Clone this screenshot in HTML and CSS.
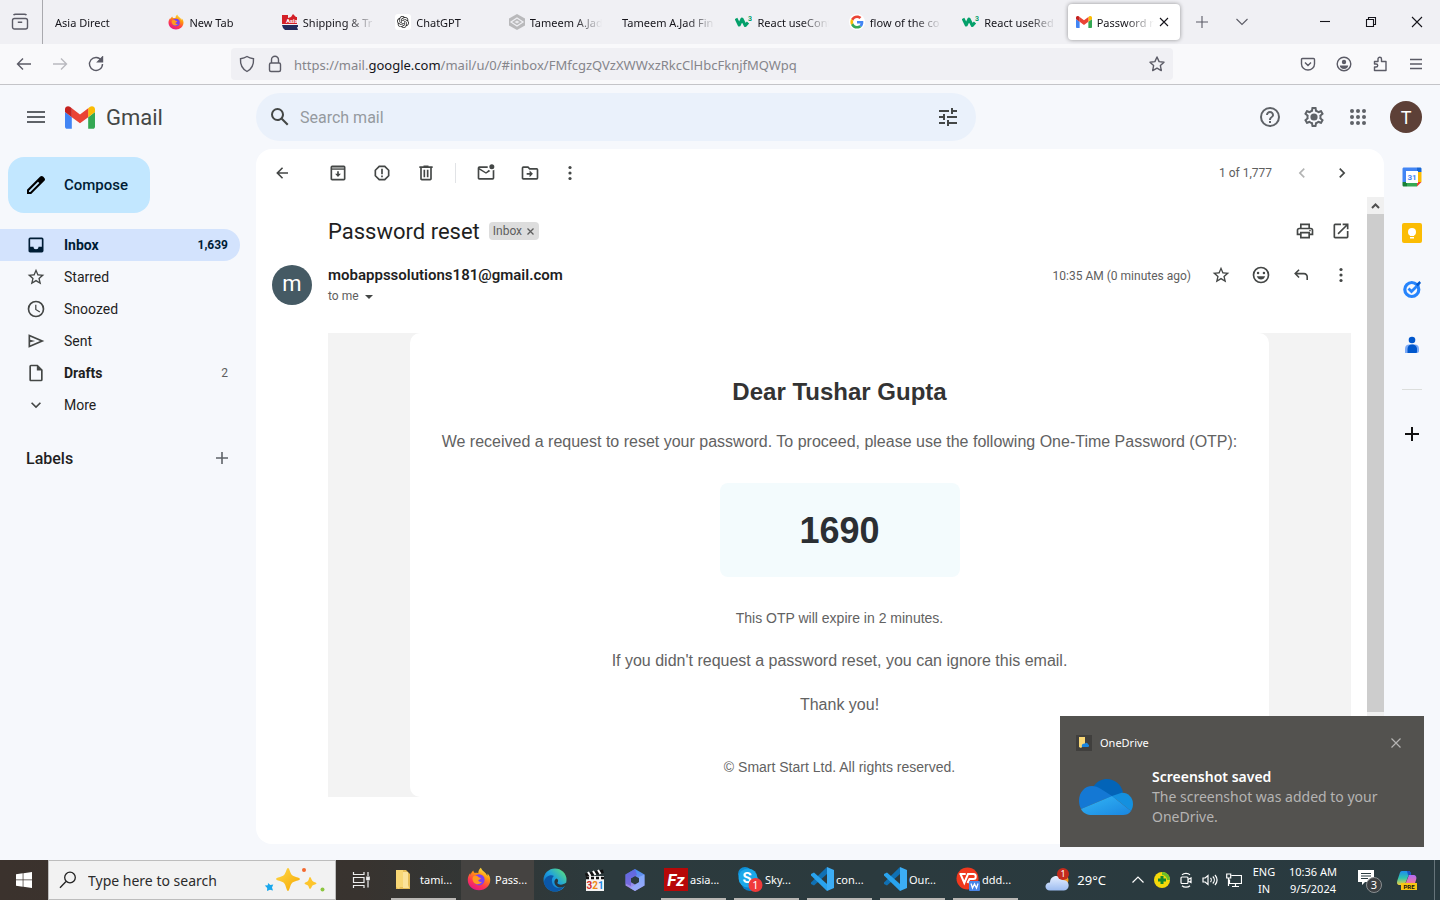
FILE: index.html
```html
<!DOCTYPE html>
<html lang="en">
<head>
<meta charset="utf-8">
<meta name="viewport" content="width=device-width, initial-scale=1">
<title>Password reset - Gmail</title>
<link rel="stylesheet" href="styles.css">
</head>
<body>
<svg class="sprite" aria-hidden="true">
  <defs>
    <linearGradient id="fx-body" x1="0.8" y1="0" x2="0.3" y2="1"><stop offset="0" stop-color="#fff44f"/><stop offset=".35" stop-color="#ff980e"/><stop offset=".7" stop-color="#ff3750"/><stop offset="1" stop-color="#e31587"/></linearGradient>
    <linearGradient id="edge-a" x1="0" y1="1" x2="1" y2="0"><stop offset="0" stop-color="#0c59a4"/><stop offset=".5" stop-color="#1b9de2"/><stop offset="1" stop-color="#66eb6e"/></linearGradient>
    <linearGradient id="hex-a" x1="0" y1="0" x2="0" y2="1"><stop offset="0" stop-color="#3f8ff0"/><stop offset="1" stop-color="#b98be8"/></linearGradient>
    <linearGradient id="cop-a" x1="0" y1="0" x2="0" y2="1"><stop offset="0" stop-color="#1d8df0"/><stop offset=".5" stop-color="#2fc4b0"/><stop offset="1" stop-color="#f4d03a"/></linearGradient>
    <linearGradient id="cop-b" x1="0" y1="0" x2="0" y2="1"><stop offset="0" stop-color="#b06af5"/><stop offset="1" stop-color="#ff7a8a"/></linearGradient>
    <linearGradient id="cloud-a" x1="0" y1="0" x2="0" y2="1"><stop offset="0" stop-color="#e6efff"/><stop offset="1" stop-color="#9dbcf0"/></linearGradient>
    <linearGradient id="spark-a" x1="0" y1="0" x2="1" y2="1"><stop offset="0" stop-color="#ffd84a"/><stop offset="1" stop-color="#f5a800"/></linearGradient>
    <linearGradient id="od-a" x1="0" y1="0" x2="1" y2="1"><stop offset="0" stop-color="#33b6f5"/><stop offset="1" stop-color="#1a86e0"/></linearGradient>
  </defs>
  <symbol id="gmail" viewBox="52 42 88 66"><path fill="#4285f4" d="M58 108h14V74L52 59v43c0 3.300 2.700 6 6 6"/><path fill="#34a853" d="M120 108h14c3.300 0 6-2.700 6-6V59l-20 15"/><path fill="#fbbc04" d="M120 48v26l20-15v-8c0-7.400-8.500-11.700-14.400-7.200"/><path fill="#ea4335" d="M72 74V48l24 18 24-18v26L96 92"/><path fill="#c5221f" d="M52 51v8l20 15V48l-5.600-4.200c-5.900-4.500-14.400-.2-14.400 7.200"/></symbol>
  <symbol id="firefox" viewBox="0 0 32 32"><path fill="url(#fx-body)" d="M18.500 1c1 3 4 5 6 7 1.500 1.500 2 3 2.500 4 .5-1 .5-2.500.3-3.500C30 11 31 14 31 17c0 8-6.500 14-15 14S1 25 1 17c0-3.500 1.500-7 3.500-9 0 1 .1 1.600.5 2.200C5.500 8 7 6 8.500 4.800c.1 1.500.8 2.700 2 3.200 1.500-.3 3-.2 4.500.2C15 5 16.500 2.500 18.500 1z"/><circle cx="16" cy="17" r="7.500" fill="#7b3ff2"/><path fill="#ff9a1f" d="M8 13c3-3 6-1 7.500.5 1.500.4 3 .7 3 1.500-.5 1.500-3 1.500-3.500 3 .5 1.500 2.500 2.500 5 1.500-2 4-8 4.500-11 1-2-2.500-2-5-1-7.500z"/></symbol>
  <symbol id="star" viewBox="0 0 24 24"><path d="M22 9.240l-7.190-.62L12 2 9.190 8.630 2 9.240l5.460 4.730L5.820 21 12 17.270 18.180 21l-1.630-7.030L22 9.240zM12 15.400l-3.760 2.270 1-4.280-3.320-2.880 4.380-.38L12 6.100l1.710 4.040 4.380.38-3.320 2.880 1 4.280L12 15.400z"/></symbol>
  <symbol id="dots" viewBox="0 0 20 20"><circle cx="10" cy="4.500" r="1.600"/><circle cx="10" cy="10" r="1.600"/><circle cx="10" cy="15.500" r="1.600"/></symbol>
  <symbol id="vscode" viewBox="0 0 24 24"><path fill="#1070b3" d="M17 0v7L4 18.500 1 17v-1.500z"/><path fill="#29a3ee" d="M17 24v-7L4 5.500 1 7v1.500z"/><path fill="#3cadf5" d="M17 0l7 3v18l-7 3z"/></symbol>
  <symbol id="cloud" viewBox="0 0 56 38"><path fill="#0364b8" d="M15 9C19 3 24 1 29 1c7 0 14 5 16 13L33 25z"/><path fill="#1478d4" d="M1 23C1 14 7 8 14 8c3 0 6 1 9 3l11 7L3 31c-1-2-2-5-2-8z"/><path fill="#1490df" d="M34 18l9-3c6-1 12 4 12 11 0 3-1 5-2 7z"/><path fill="url(#od-a)" d="M3 31l31-13 19 15c-2 3-5 4-8 4H14c-5 0-9-2-11-6z"/></symbol>
</svg>

<div class="screen">
  <header class="browser">
    <div class="tabstrip">
      <button class="tab-overview" aria-label="View recent browsing"><svg width="18" height="18" viewBox="0 0 18 18" class="line"><rect x="1.500" y="5.500" width="15" height="10.500" rx="2"/><path d="M2.500 2.200C3 1.500 3.500 1.200 4.500 1.200h9c1 0 1.500.3 2 1M6.800 9.300h4.400"/></svg></button>
      <div class="tabs" role="tablist">
        <button class="tab" role="tab"><span class="tab-title">Asia Direct</span></button>
        <button class="tab" role="tab"><svg width="16" height="16"><use href="#firefox"/></svg><span class="tab-title">New Tab</span></button>
        <button class="tab" role="tab"><svg width="16" height="16" viewBox="0 0 16 16"><path fill="#d32027" d="M0 1h6v3l3-1 2-3 3 3h1v7H0z"/><path fill="#222a5c" d="M0 11h16v2h-1l1 3H3l-2-2z"/><text x="4" y="9" font-size="6" font-weight="700" font-family="Roboto, sans-serif" fill="#fff">Asia</text></svg><span class="tab-title">Shipping &amp; Tr</span></button>
        <button class="tab" role="tab"><svg width="16" height="16" viewBox="-4 -4 32 32"><rect x="-4" y="-4" width="32" height="32" rx="6" fill="#fff"/><path fill="#222" d="M22.280 9.820a5.980 5.980 0 0 0-.52-4.910 6.050 6.050 0 0 0-6.510-2.900A6.070 6.070 0 0 0 4.980 4.180a5.980 5.980 0 0 0-4 2.900 6.050 6.050 0 0 0 .74 7.100 5.980 5.980 0 0 0 .51 4.910 6.050 6.050 0 0 0 6.520 2.900A5.980 5.980 0 0 0 13.260 24a6.060 6.060 0 0 0 5.770-4.210 5.990 5.990 0 0 0 4-2.900 6.060 6.060 0 0 0-.75-7.070zm-9.020 12.610a4.480 4.480 0 0 1-2.880-1.040l.14-.08 4.780-2.760a.8.8 0 0 0 .39-.68v-6.740l2.020 1.170a.07.07 0 0 1 .04.05v5.580a4.500 4.500 0 0 1-4.490 4.500zm-9.660-4.130a4.470 4.470 0 0 1-.53-3.010l.14.09 4.780 2.750a.77.77 0 0 0 .78 0l5.840-3.370v2.340a.08.08 0 0 1-.03.06L9.740 19.950a4.500 4.500 0 0 1-6.140-1.650zM2.340 7.900a4.490 4.490 0 0 1 2.370-1.980V11.600a.77.77 0 0 0 .39.680l5.810 3.350-2.020 1.170a.08.08 0 0 1-.07 0l-4.830-2.790A4.500 4.500 0 0 1 2.340 7.900zm16.600 3.850L13.100 8.360 15.120 7.200a.08.08 0 0 1 .07 0l4.830 2.790a4.490 4.490 0 0 1-.68 8.110v-5.680a.79.79 0 0 0-.4-.67zm2.010-3.020l-.14-.09-4.780-2.780a.78.78 0 0 0-.78 0L9.410 9.230V6.900a.07.07 0 0 1 .03-.06l4.830-2.790a4.500 4.500 0 0 1 6.680 4.680zM8.310 12.860l-2.020-1.160a.08.08 0 0 1-.04-.06V6.070a4.500 4.500 0 0 1 7.370-3.450l-.14.08L8.700 5.460a.8.8 0 0 0-.39.680zm1.100-2.360l2.600-1.500 2.600 1.500v3l-2.600 1.500-2.600-1.500z"/></svg><span class="tab-title">ChatGPT</span></button>
        <button class="tab" role="tab"><svg width="16" height="16" viewBox="0 0 16 16"><path fill="#b9b9bb" d="M8 0l8 4.500v7L8 16 0 11.500v-7z"/><path fill="none" stroke="#f0f0f4" stroke-width="1.200" d="M2 8l6-4 6 4-6 4z"/><path fill="#e9e9ec" d="M8 6.500L10.500 8 8 9.500 5.500 8z"/></svg><span class="tab-title">Tameem A.Jad</span></button>
        <button class="tab" role="tab"><span class="tab-title">Tameem A.Jad Fin</span></button>
        <button class="tab" role="tab"><svg width="17" height="16" viewBox="0 0 17 16"><path fill="none" stroke="#04a06a" stroke-width="3" stroke-linejoin="round" d="M1 4.500l3.200 6.500L7 5l3.300 6.500L13 8.500"/><text x="13" y="7" font-size="7" font-weight="700" font-family="Roboto, sans-serif" fill="#04a06a">3</text></svg><span class="tab-title">React useCont</span></button>
        <button class="tab" role="tab"><svg width="16" height="16" viewBox="-5 -5 58 58"><circle cx="24" cy="24" r="29" fill="#fff"/><path fill="#EA4335" d="M24 9.500c3.540 0 6.710 1.220 9.210 3.600l6.850-6.850C35.900 2.380 30.470 0 24 0 14.620 0 6.510 5.380 2.560 13.220l7.980 6.190C12.430 13.720 17.740 9.500 24 9.500z"/><path fill="#4285F4" d="M46.980 24.550c0-1.570-.15-3.090-.38-4.550H24v9.020h12.940c-.58 2.960-2.260 5.480-4.780 7.180l7.730 6c4.510-4.180 7.090-10.360 7.090-17.650z"/><path fill="#FBBC05" d="M10.530 28.590c-.48-1.450-.76-2.990-.76-4.590s.27-3.140.76-4.590l-7.980-6.190C.92 16.460 0 20.120 0 24c0 3.880.92 7.540 2.560 10.780l7.970-6.190z"/><path fill="#34A853" d="M24 48c6.480 0 11.930-2.130 15.890-5.810l-7.730-6c-2.150 1.450-4.920 2.300-8.160 2.300-6.260 0-11.570-4.220-13.470-9.910l-7.980 6.190C6.510 42.620 14.620 48 24 48z"/></svg><span class="tab-title">flow of the co</span></button>
        <button class="tab" role="tab"><svg width="17" height="16" viewBox="0 0 17 16"><path fill="none" stroke="#04a06a" stroke-width="3" stroke-linejoin="round" d="M1 4.500l3.200 6.500L7 5l3.300 6.500L13 8.500"/><text x="13" y="7" font-size="7" font-weight="700" font-family="Roboto, sans-serif" fill="#04a06a">3</text></svg><span class="tab-title">React useRed</span></button>
        <button class="tab tab-active" role="tab" aria-selected="true"><svg width="16" height="12"><use href="#gmail"/></svg><span class="tab-title">Password r</span><svg class="line thin dark" width="10" height="10" viewBox="0 0 10 10"><path d="M1 1l8 8M9 1L1 9"/></svg></button>
      </div>
      <div class="tab-tools">
        <button aria-label="New tab"><svg class="line thin" width="14" height="14" viewBox="0 0 14 14"><path d="M7 1v12M1 7h12"/></svg></button>
        <button aria-label="List all tabs"><svg class="line thin" width="14" height="14" viewBox="0 0 14 14"><path d="M1.500 4L7 9.500 12.500 4"/></svg></button>
      </div>
      <div class="window-tools">
        <button aria-label="Minimize"><svg class="line thin dark" width="12" height="12" viewBox="0 0 12 12"><path d="M1 5.500h10"/></svg></button>
        <button aria-label="Restore"><svg class="line thin dark" width="12" height="12" viewBox="0 0 12 12"><path d="M1.500 3.500h7v7h-7zM3.500 3.500v-2h7v7h-2"/></svg></button>
        <button aria-label="Close"><svg class="line thin dark" width="12" height="12" viewBox="0 0 12 12"><path d="M1 1l10 10M11 1L1 11"/></svg></button>
      </div>
    </div>
    <div class="navbar">
      <div class="nav-left">
        <button aria-label="Back"><svg class="line" width="16" height="16" viewBox="0 0 16 16"><path d="M15 8H1.500M7 2.500L1.500 8 7 13.500"/></svg></button>
        <button aria-label="Forward" disabled><svg class="line" width="16" height="16" viewBox="0 0 16 16"><path d="M1 8h13.500M9 2.500L14.500 8 9 13.500"/></svg></button>
        <button aria-label="Reload"><svg class="line" width="16" height="16" viewBox="0 0 16 16"><path d="M13.500 4.500A6.500 6.500 0 1 0 14.500 8"/><path d="M14.500 1v4.800H9.800z" fill="#5b5b66"/></svg></button>
      </div>
      <div class="urlbar">
        <svg class="line" width="18" height="18" viewBox="0 0 18 18"><path d="M9 1.500c2 1.300 4 1.900 6.500 2.200.4 5.800-1.500 10-6.500 12.800C4 13.700 2.100 9.500 2.500 3.700 5 3.400 7 2.800 9 1.500z"/></svg>
        <svg class="line" width="18" height="18" viewBox="0 0 18 18"><rect x="3.500" y="8" width="11" height="8.500" rx="1.500"/><path d="M5.500 8V4.800a3.500 3.500 0 0 1 7 0V8"/></svg>
        <div class="url" role="textbox" aria-label="Address" contenteditable="true" spellcheck="false">https://mail.<b>google.com</b>/mail/u/0/#inbox/FMfcgzQVzXWWxzRkcClHbcFknjfMQWpq</div>
        <button aria-label="Bookmark"><svg class="line" width="16" height="16" viewBox="0 0 16 16"><path stroke-linejoin="round" d="M8 1l2.100 4.600 4.900.6-3.600 3.400.9 5L8 12.100 3.700 14.600l.9-5L1 6.200l4.900-.6z"/></svg></button>
      </div>
      <div class="nav-right">
        <button aria-label="Pocket"><svg class="line" width="16" height="16" viewBox="0 0 16 16"><path d="M2.500 2.500h11c.7 0 1 .4 1 1V8a6.500 6 0 0 1-13 0V3.500c0-.6.300-1 1-1zM5 6.500l3 3 3-3"/></svg></button>
        <button aria-label="Account"><svg class="line" width="16" height="16" viewBox="0 0 16 16"><circle cx="8" cy="8" r="6.800"/><circle cx="8" cy="6" r="2.200" fill="#5b5b66" stroke="none"/><path fill="#5b5b66" stroke="none" d="M3.800 9.500h8.400C12 11.500 10.500 13 8 13s-4-1.500-4.200-3.500z"/></svg></button>
        <button aria-label="Extensions"><svg class="line" width="16" height="16" viewBox="0 0 16 16"><path stroke-linejoin="round" d="M2.500 5.500h3.500V3c0-2.300 3.500-2.300 3.500 0v2.500h4.500v9H2.500V11H4c2.300 0 2.300-3 0-3H2.500z"/></svg></button>
        <button aria-label="Menu"><svg class="line" width="14" height="14" viewBox="0 0 14 14"><path d="M1 2.500h12M1 7h12M1 11.500h12"/></svg></button>
      </div>
    </div>
  </header>

  <div class="gmail">
    <header class="gm-header">
      <div class="brand">
        <button aria-label="Main menu"><svg class="fill" width="24" height="24" viewBox="0 0 24 24"><path d="M3 18h18v-2H3v2zm0-5h18v-2H3v2zm0-7v2h18V6H3z"/></svg></button>
        <a href="#"><svg width="30" height="23"><use href="#gmail"/></svg><span>Gmail</span></a>
      </div>
      <form class="search">
        <button type="button" aria-label="Search"><svg class="fill deep" width="24" height="24" viewBox="0 0 24 24"><path d="M20.490 19l-5.730-5.730C15.530 12.200 16 10.910 16 9.500A6.500 6.500 0 1 0 9.500 16c1.410 0 2.700-.47 3.770-1.240L19 20.490 20.490 19zM5 9.500C5 7.010 7.010 5 9.500 5S14 7.010 14 9.500 11.990 14 9.500 14 5 11.990 5 9.500z"/></svg></button>
        <input type="search" placeholder="Search mail" aria-label="Search mail">
        <button type="button" aria-label="Search options"><svg class="fill deep" width="24" height="24" viewBox="0 0 24 24"><path d="M3 17v2h6v-2H3zM3 5v2h10V5H3zm10 16v-2h8v-2h-8v-2h-2v6h2zM7 9v2H3v2h4v2h2V9H7zm14 4v-2H11v2h10zm-6-4h2V7h4V5h-4V3h-2v6z"/></svg></button>
      </form>
      <div class="gm-tools">
        <button aria-label="Support"><svg class="fill" width="24" height="24" viewBox="0 0 24 24"><path d="M11 18h2v-2h-2v2zm1-16a10 10 0 1 0 0 20 10 10 0 0 0 0-20zm0 18a8 8 0 1 1 0-16 8 8 0 0 1 0 16zm0-14c-2.210 0-4 1.790-4 4h2c0-1.100.9-2 2-2s2 .9 2 2c0 2-3 1.750-3 5h2c0-2.250 3-2.500 3-5 0-2.210-1.790-4-4-4z"/></svg></button>
        <button aria-label="Settings"><svg class="fill" width="24" height="24" viewBox="0 0 24 24"><path d="M19.430 12.980c.04-.32.07-.64.07-.98 0-.34-.03-.66-.07-.98l2.110-1.650c.19-.15.24-.42.12-.64l-2-3.460c-.09-.16-.26-.25-.44-.25-.06 0-.12.01-.17.03l-2.490 1c-.52-.4-1.080-.73-1.690-.98l-.38-2.650C14.460 2.180 14.250 2 14 2h-4c-.25 0-.46.18-.49.42l-.38 2.650c-.61.25-1.170.59-1.690.98l-2.490-1c-.06-.02-.12-.03-.18-.03-.17 0-.34.09-.43.25l-2 3.460c-.13.22-.07.49.12.64l2.110 1.650c-.04.32-.07.65-.07.98 0 .33.03.66.07.98l-2.110 1.650c-.19.15-.24.42-.12.64l2 3.460c.09.16.26.25.44.25.06 0 .12-.01.17-.03l2.490-1c.52.4 1.080.73 1.690.98l.38 2.650c.03.24.24.42.49.42h4c.25 0 .46-.18.49-.42l.38-2.650c.61-.25 1.170-.59 1.690-.98l2.490 1c.06.02.12.03.18.03.17 0 .34-.09.43-.25l2-3.460c.12-.22.07-.49-.12-.64l-2.110-1.650zm-1.980-1.710c.04.31.05.52.05.73 0 .21-.02.43-.05.73l-.14 1.130.89.7 1.080.84-.7 1.210-1.270-.51-1.040-.42-.9.68c-.43.32-.84.56-1.250.73l-1.060.43-.16 1.130-.2 1.350h-1.400l-.19-1.350-.16-1.130-1.060-.43c-.43-.18-.83-.41-1.230-.71l-.91-.7-1.060.43-1.270.51-.7-1.210 1.080-.84.89-.7-.14-1.130c-.03-.31-.05-.54-.05-.74s.02-.43.05-.73l.14-1.130-.89-.7-1.080-.84.7-1.210 1.270.51 1.040.42.9-.68c.43-.32.84-.56 1.250-.73l1.060-.43.16-1.130.2-1.350h1.390l.19 1.350.16 1.130 1.060.43c.43.18.83.41 1.230.71l.91.7 1.060-.43 1.270-.51.7 1.210-1.070.85-.89.7.14 1.130z"/><circle cx="12" cy="12" r="3.600"/></svg></button>
        <button aria-label="Google apps"><svg class="fill" width="24" height="24" viewBox="0 0 24 24"><circle cx="6" cy="6" r="2"/><circle cx="12" cy="6" r="2"/><circle cx="18" cy="6" r="2"/><circle cx="6" cy="12" r="2"/><circle cx="12" cy="12" r="2"/><circle cx="18" cy="12" r="2"/><circle cx="6" cy="18" r="2"/><circle cx="12" cy="18" r="2"/><circle cx="18" cy="18" r="2"/></svg></button>
        <button class="profile" aria-label="Google Account">T</button>
      </div>
    </header>

    <aside class="sidebar">
      <button class="compose"><svg width="24" height="24" viewBox="0 0 24 24"><path d="M20.410 4.940l-1.350-1.350a2 2 0 0 0-2.830 0L3 16.820V21h4.180L20.410 7.770c.79-.78.79-2.050 0-2.830zM6.300 19H5v-1.300L14 8.700 15.300 10z"/></svg>Compose</button>
      <nav class="folders">
        <a href="#" class="folder folder-on"><svg width="20" height="20" viewBox="0 0 24 24"><path d="M19 3H5a2 2 0 0 0-2 2v14c0 1.100.9 2 2 2h14a2 2 0 0 0 2-2V5a2 2 0 0 0-2-2zm0 11h-4a3 3 0 0 1-6 0H5V5h14z"/></svg><span>Inbox</span><em>1,639</em></a>
        <a href="#" class="folder"><svg width="20" height="20"><use href="#star"/></svg><span>Starred</span></a>
        <a href="#" class="folder"><svg width="20" height="20" viewBox="0 0 24 24"><path d="M12 2a10 10 0 1 0 0 20 10 10 0 0 0 0-20zm0 18a8 8 0 1 1 0-16 8 8 0 0 1 0 16zm.5-13H11v6l5.200 3.200.8-1.300-4.500-2.700z"/></svg><span>Snoozed</span></a>
        <a href="#" class="folder"><svg width="20" height="20" viewBox="0 0 24 24"><path d="M3 4v16l19-8L3 4zm2 3l11.850 5L5 17v-3.500l6-1.500-6-1.500V7z"/></svg><span>Sent</span></a>
        <a href="#" class="folder folder-bold"><svg width="20" height="20" viewBox="0 0 24 24"><path d="M14 2H6a2 2 0 0 0-2 2v16c0 1.100.9 2 2 2h12a2 2 0 0 0 2-2V8l-6-6zM6 20V4h7v5h5v11H6z"/></svg><span>Drafts</span><em>2</em></a>
        <a href="#" class="folder"><svg width="20" height="20" viewBox="0 0 24 24"><path d="M16.590 8.590L12 13.170 7.410 8.590 6 10l6 6 6-6z"/></svg><span>More</span></a>
      </nav>
      <div class="labels"><h2>Labels</h2><button aria-label="Create new label"><svg class="fill" width="20" height="20" viewBox="0 0 20 20"><path d="M9.200 4h1.600v5.200H16v1.600h-5.200V16H9.200v-5.200H4V9.200h5.200z"/></svg></button></div>
    </aside>

    <main class="panel">
      <div class="mail-tools">
        <button class="back" aria-label="Back to Inbox"><svg width="20" height="20" viewBox="0 0 20 20"><path d="M16 9.200H7.200l3.900-3.900L10 4.200 4.200 10l5.800 5.800 1.100-1.100-3.900-3.900H16z"/></svg></button>
        <button aria-label="Archive"><svg width="20" height="20" viewBox="0 0 24 24"><path d="M19 3H5a2 2 0 0 0-2 2v14c0 1.100.9 2 2 2h14a2 2 0 0 0 2-2V5a2 2 0 0 0-2-2zM5 19V8h14v11zM5 6.500V5h14v1.500z"/><path d="M5 5h14v1.500H5z" opacity=".5"/><path d="M11 10h2v3h2.500L12 16.800 8.500 13H11z"/></svg></button>
        <button aria-label="Report spam"><svg width="20" height="20" viewBox="0 0 24 24"><path d="M15.730 3H8.270L3 8.270v7.460L8.270 21h7.460L21 15.730V8.270L15.730 3zM19 14.900L14.900 19H9.100L5 14.900V9.100L9.100 5h5.800L19 9.100v5.800zM11 15h2v2h-2zm0-8h2v6.500h-2z"/></svg></button>
        <button aria-label="Delete"><svg width="20" height="20" viewBox="0 0 24 24"><path d="M15 4V3H9v1H4v2h1v13c0 1.100.9 2 2 2h10a2 2 0 0 0 2-2V6h1V4h-5zm2 15H7V6h10v13zM9 8h2v9H9zm4 0h2v9h-2z"/></svg></button>
        <span class="sep"></span>
        <button aria-label="Mark as unread"><svg width="20" height="20" viewBox="0 0 24 24"><path d="M20 8.700V18H4V8l8 5 5.300-3.300c-.8-.4-1.500-1-1.900-1.700L12 11 4 6h10.100a5 5 0 0 1 0-2H4a2 2 0 0 0-2 2v12c0 1.100.9 2 2 2h16a2 2 0 0 0 2-2V8c-.6.400-1.300.600-2 .7z"/><circle cx="19" cy="4.500" r="3"/></svg></button>
        <button aria-label="Move to"><svg width="20" height="20" viewBox="0 0 24 24"><path d="M20 6h-8l-2-2H4a2 2 0 0 0-2 2v12c0 1.100.9 2 2 2h16a2 2 0 0 0 2-2V8a2 2 0 0 0-2-2zm0 12H4V6h5.200l2 2H20v10zm-8.500-1v-3H8v-2h3.500V9l4 4z"/></svg></button>
        <button class="tight" aria-label="More"><svg width="20" height="20"><use href="#dots"/></svg></button>
        <span class="count">1 of 1,777</span>
        <button class="faint" aria-label="Newer"><svg width="20" height="20" viewBox="0 0 24 24"><path d="M15.410 7.410L14 6l-6 6 6 6 1.410-1.410L10.830 12z"/></svg></button>
        <button aria-label="Older"><svg width="20" height="20" viewBox="0 0 24 24"><path d="M8.590 16.590L10 18l6-6-6-6-1.410 1.410L13.170 12z"/></svg></button>
      </div>
      <div class="scroller">
        <article class="message">
          <div class="subject">
            <h1>Password reset</h1>
            <button class="chip">Inbox <svg width="9" height="9" viewBox="0 0 9 9"><path d="M1.500 1.500l6 6M7.500 1.500l-6 6" stroke="#5e5e5e" stroke-width="1.300"/></svg></button>
            <div class="subject-tools">
              <button aria-label="Print all"><svg width="20" height="20" viewBox="0 0 24 24"><path d="M19 8h-1V3H6v5H5a3 3 0 0 0-3 3v6h4v4h12v-4h4v-6a3 3 0 0 0-3-3zM8 5h8v3H8V5zm8 14H8v-4h8v4zm2-4v-2H6v2H4v-4c0-.55.45-1 1-1h14c.55 0 1 .45 1 1v4h-2z"/><circle cx="18" cy="11.500" r="1"/></svg></button>
              <button aria-label="In new window"><svg width="20" height="20" viewBox="0 0 24 24"><path d="M19 19H5V5h7V3H5a2 2 0 0 0-2 2v14c0 1.100.9 2 2 2h14a2 2 0 0 0 2-2v-7h-2v7zM14 3v2h3.590l-9.830 9.830 1.410 1.410L19 6.410V10h2V3h-7z"/></svg></button>
            </div>
          </div>
          <div class="sender">
            <span class="avatar">m</span>
            <div class="from"><strong>mobappssolutions181@gmail.com</strong><button>to me <svg width="8" height="4" viewBox="0 0 8 4"><path d="M0 0h8L4 4z"/></svg></button></div>
            <time>10:35 AM (0 minutes ago)</time>
            <div class="sender-tools">
              <button aria-label="Star"><svg width="20" height="20"><use href="#star"/></svg></button>
              <button aria-label="Add reaction"><svg width="20" height="20" viewBox="0 0 24 24"><path d="M12 2a10 10 0 1 0 0 20 10 10 0 0 0 0-20zm0 18a8 8 0 1 1 0-16 8 8 0 0 1 0 16z"/><circle cx="8.500" cy="9.500" r="1.500"/><circle cx="15.500" cy="9.500" r="1.500"/><path d="M7 13.500h10c-.7 2.300-2.700 4-5 4s-4.300-1.700-5-4z"/></svg></button>
              <button aria-label="Reply"><svg width="20" height="20" viewBox="0 0 20 20"><path d="M7.500 4.200l1.100 1.100-2.500 2.500H13c2.300 0 4 1.700 4 4V15h-1.600v-3.200c0-1.400-1-2.400-2.400-2.400H6.100l2.500 2.500L7.500 13 3.100 8.600z"/></svg></button>
              <button aria-label="More"><svg width="20" height="20"><use href="#dots"/></svg></button>
            </div>
          </div>
          <div class="email">
            <section class="card">
              <h2>Dear Tushar Gupta</h2>
              <p class="lead">We received a request to reset your password. To proceed, please use the following One-Time Password (OTP):</p>
              <div class="otp">1690</div>
              <p class="small">This OTP will expire in 2 minutes.</p>
              <p>If you didn't request a password reset, you can ignore this email.</p>
              <p>Thank you!</p>
              <p class="small legal">© Smart Start Ltd. All rights reserved.</p>
            </section>
          </div>
        </article>
        <div class="scrollbar"><button aria-label="Scroll up"><svg width="9" height="6" viewBox="0 0 9 6"><path d="M1 5l3.500-3.500L8 5" fill="none" stroke="#505050" stroke-width="2"/></svg></button><span></span></div>
      </div>
    </main>

    <aside class="rail">
      <button aria-label="Calendar"><svg width="20" height="20" viewBox="0 0 20 20"><path fill="#4285f4" d="M2 .5h13V5H5v10H.500V2C.500 1 1 .5 2 .5z"/><path fill="#1967d2" d="M15 .5h3c1 0 1.500.5 1.500 1.500v3H15z"/><path fill="#fbbc04" d="M15 5h4.500v10H15z"/><path fill="#34a853" d="M5 15h10v4.500H5z"/><path fill="#188038" d="M.500 15H5v4.500H2c-1 0-1.500-.5-1.500-1.500z"/><path fill="#ea4335" d="M15 15h4.500L15 19.500z"/><path fill="#fff" d="M4 4h12v12H4z"/><text x="10" y="13" text-anchor="middle" font-size="8" font-weight="700" font-family="Roboto, sans-serif" fill="#4285f4">31</text></svg></button>
      <button aria-label="Keep"><svg width="20" height="20" viewBox="0 0 20 20"><rect width="20" height="20" rx="2" fill="#fbbc04"/><circle cx="10" cy="9" r="4" fill="#fff"/><path fill="#fff" d="M8 11h4v2H8zM8 14h4v1.500H8z"/></svg></button>
      <button aria-label="Tasks"><svg width="20" height="20" viewBox="0 0 20 20"><circle cx="9.800" cy="10.500" r="7" fill="none" stroke="#2684fc" stroke-width="3.200"/><path fill="none" stroke="#2684fc" stroke-width="2.800" d="M6.500 9.500l3 3L17 5"/><path fill="#0057cc" d="M14 5.300L17.500 2 19 4l-3.300 3.400z"/></svg></button>
      <button aria-label="Contacts"><svg width="20" height="20" viewBox="0 0 20 20"><circle cx="10" cy="5" r="3.300" fill="#0057cc"/><path fill="#7baaf7" d="M3 18v-4.500C3 11 5 9.500 7 9.500h6c2 0 4 1.500 4 4V16c0 1.200-.8 2-2 2z"/><path fill="#0057cc" d="M5.500 18v-4c0-2.500 1.500-4.500 4.500-4.500s5 2 5 4.500v2.500c0 1-.5 1.500-1.500 1.500z"/></svg></button>
      <hr>
      <button aria-label="Get add-ons"><svg width="20" height="20" viewBox="0 0 20 20"><path fill="#111" d="M9 3h2v6h6v2h-6v6H9v-6H3V9h6z"/></svg></button>
    </aside>
  </div>

  <footer class="taskbar">
    <button class="start" aria-label="Start"><svg width="16" height="16" viewBox="0 0 16 16" fill="#fff"><path d="M0 2.200l6.700-.9v6.300H0zM7.400 1.200L16 0v7.600H7.400zM0 8.300h6.700v6.400L0 13.800zM7.400 8.300H16V16l-8.600-1.200z"/></svg></button>
    <label class="win-search">
      <svg width="18" height="18" viewBox="0 0 18 18" fill="none" stroke="#222" stroke-width="1.300"><circle cx="11" cy="6.500" r="5.300"/><path d="M7 10.500L1 16.800"/></svg>
      <input type="text" placeholder="Type here to search" aria-label="Type here to search">
      <svg width="62" height="26" viewBox="0 0 62 26"><path fill="url(#spark-a)" d="M24 1c1.500 0 2 5 4 7s8 2.500 8 4-6 2-8 4-2.500 8-4 8-2-6-4-8-8-2.500-8-4 6-2 8-4 2.500-7 4-7z"/><path fill="#fdc52c" d="M46 10c1 0 1.500 3 2.500 4s4 1.500 4 2.500-3 1-4 2-1.500 3.500-2.500 3.500-1-2.500-2-3.500-3.500-1-3.500-2 2.500-1.500 3.500-2.500 1-4 2-4z"/><path fill="#1aa7ec" d="M4 16l2.300 2 3-.5-1.300 3 1 3-3-.8-3 1.300.2-3L.8 18.600l3-.3z"/><circle cx="40" cy="3" r="2" fill="#f4682f"/><circle cx="58.500" cy="22.500" r="2" fill="#8cc63f"/></svg>
    </label>
    <button class="view" aria-label="Task View"><svg width="18" height="16" viewBox="0 0 18 16" fill="none" stroke="#eee" stroke-width="1.200"><path d="M1.500 0v2.500h10.500V0M1.500 16v-2.500H12V16M1.500 5.500H12v5H1.500zM16 0v4M16 8.500v7"/><path d="M14.800 5.200h2.400v2.400h-2.400z" fill="#eee"/></svg></button>
    <div class="apps">
      <button class="app open"><svg width="24" height="24" viewBox="0 0 24 24"><path fill="#e6bd58" d="M2 3h10l4 4v15H2z"/><path fill="#f8d775" d="M2 3h7v17H6l-1 2-3-2z"/><path fill="#fbe29a" d="M9 5h5v13l1 3H9z"/></svg><span>tami...</span></button>
      <button class="app open current"><svg width="24" height="24"><use href="#firefox"/></svg><span>Pass...</span></button>
      <button class="app pin" aria-label="Edge"><svg width="24" height="24" viewBox="0 0 24 24"><circle cx="12" cy="12" r="11.500" fill="url(#edge-a)"/><path fill="#0b57a8" d="M1 14C2 9 7 6 11 8c-3 2-3 8 1 11 3 2 7 1 9.500-1C18 24 10 25 5 21c-2-2-4-4-4-7z"/><path fill="#2a363c" d="M13.500 10.500c2 .5 2 3 .8 4.500 1.700 2.500 6 2 9-.5l.5 2c-2 2.500-6 4-9 2.500-4-2-4.500-7-1.300-8.500z"/></svg></button>
      <button class="app pin" aria-label="Media player"><svg width="24" height="24" viewBox="0 0 24 24"><path fill="#f4f4f4" d="M3 8h18v15H3z"/><path fill="#111" d="M2 5.500L20 1.500l.8 3.500L3 9z"/><path stroke="#fff" stroke-width="2" d="M5 4l2.500 4M10 3l2.500 4M15 2l2.500 4"/><path stroke="#111" stroke-width="2.500" stroke-dasharray="3 2" d="M3 10h18"/><text x="12" y="21" text-anchor="middle" font-size="10" font-weight="700" font-family="Roboto, sans-serif"><tspan fill="#d32f2f">3</tspan><tspan fill="#f08a1c">2</tspan><tspan fill="#1e88e5">1</tspan></text></svg></button>
      <button class="app pin" aria-label="Microsoft 365"><svg width="24" height="24" viewBox="0 0 24 24"><path fill="url(#hex-a)" fill-rule="evenodd" d="M12 1l9.500 5.500v11L12 23l-9.500-5.500v-11zm0 7l-4 2.300v4l4 2.200 4-2.200v-4z"/><path fill="#6a5ad8" opacity=".7" d="M12 1L2.500 6.500v9L8 18v-7.700L14 7z"/><path fill="#8fb4ff" opacity=".7" d="M21.500 6.500v11L12 23l-5-3 9-5.700V9z"/></svg></button>
      <button class="app open"><svg width="24" height="24" viewBox="0 0 24 24"><rect y="1" width="24" height="23" fill="#b70808"/><text x="12" y="19" text-anchor="middle" font-size="17" font-weight="700" font-style="italic" font-family="Roboto, sans-serif" fill="#fff">Fz</text></svg><span>asia...</span></button>
      <button class="app open"><svg width="26" height="26" viewBox="0 0 26 26"><circle cx="8" cy="8" r="7" fill="#0f8fd6"/><circle cx="13" cy="16" r="9" fill="#0a7fc8"/><circle cx="11" cy="12" r="9.500" fill="#1ba8ea"/><text x="10" y="17" text-anchor="middle" font-size="15" font-weight="700" font-family="Roboto, sans-serif" fill="#fff">S</text><circle cx="18.500" cy="19" r="7" fill="#f03a3a"/><text x="18.500" y="23" text-anchor="middle" font-size="11" font-family="Noto Sans, sans-serif" fill="#fff">1</text></svg><span>Sky...</span></button>
      <button class="app open"><svg width="24" height="24"><use href="#vscode"/></svg><span>con...</span></button>
      <button class="app open"><svg width="24" height="24"><use href="#vscode"/></svg><span>Our...</span></button>
      <button class="app open"><svg width="24" height="24" viewBox="0 0 24 24"><circle cx="11.500" cy="11.500" r="11" fill="#f0381e"/><path fill="none" stroke="#fff" stroke-width="2" d="M3.500 7h6.200M4.500 7l3.800 9 3.700-9h5.500c3 0 3 5 0 5h-4l-2 4"/><rect x="13" y="14" width="11" height="10" rx="1" fill="#4a86e8"/><path fill="none" stroke="#fff" stroke-width="1.300" d="M15 16.500l1.500 4.500 2-4 2 4 1.500-4.500"/></svg><span>ddd...</span></button>
    </div>
    <button class="weather"><svg width="24" height="24" viewBox="0 0 24 24"><circle cx="18" cy="12" r="5.500" fill="#f39a1e"/><path fill="url(#cloud-a)" d="M5 22.500c-6 0-6-8 0-8 0-7 9-9 12-2.500 8-1 9 10 2 10.500z"/><circle cx="18" cy="6" r="6" fill="#c42b1c"/><text x="18" y="9" text-anchor="middle" font-size="9" font-family="Noto Sans, sans-serif" fill="#fff">1</text></svg><span>29°C</span></button>
    <div class="tray">
      <button aria-label="Show hidden icons"><svg width="16" height="16" viewBox="0 0 16 16" class="tline"><path d="M2.500 10.500L8 5l5.500 5.500"/></svg></button>
      <button aria-label="Antivirus"><svg width="16" height="16" viewBox="0 0 16 16"><circle cx="8" cy="8" r="8" fill="#f5d90a"/><path fill="#6abf2a" d="M8 0a8 8 0 0 1 8 8h-3a5 5 0 0 0-5-5z"/><path fill="#16862b" d="M6.500 4h3v2.500H12v3H9.500V12h-3V9.500H4v-3h2.500z"/></svg></button>
      <button aria-label="Meet Now"><svg width="16" height="16" viewBox="0 0 16 16" class="tline"><rect x="3" y="5" width="7" height="6.500" rx="1"/><path d="M10 7.500l3-1.500v4.500l-3-1.500M4 2.800C6 .8 10 .8 12 2.800M4 13.700c2 1.800 6 1.800 8 0"/></svg></button>
      <button aria-label="Volume"><svg width="16" height="16" viewBox="0 0 16 16" class="tline"><path d="M1 6h2.200L6 3.500v9L3.200 10H1zM8.500 6c1 1 1 3 0 4M10.800 4.500c2 2 2 5 0 7M13 3c2.500 3 2.500 7 0 10"/></svg></button>
      <button aria-label="Network"><svg width="16" height="16" viewBox="0 0 16 16" class="tline"><path d="M5.500 3.500h10v8h-12V7.500M9.500 11.500V14M6 14.500h7M.7 2h4v4h-4zM2.500 6v8"/></svg></button>
    </div>
    <button class="lang"><span>ENG</span><span>IN</span></button>
    <button class="clock"><span>10:36 AM</span><span>9/5/2024</span></button>
    <button class="notes" aria-label="3 notifications"><svg width="24" height="26" viewBox="0 0 24 26"><path fill="#fff" d="M0 3h16v12H7l-3 3v-3H0z"/><path stroke="#293a40" stroke-width="1.200" d="M3 6.500h10M3 9h10M3 11.500h7"/><circle cx="16" cy="18" r="7.500" fill="#3c3f42" stroke="#8b8f91"/><text x="16" y="22" text-anchor="middle" font-size="11" font-family="Noto Sans, sans-serif" fill="#fff">3</text></svg></button>
    <button class="copilot" aria-label="Copilot"><svg width="22" height="22" viewBox="0 0 22 22"><path fill="url(#cop-a)" d="M6 2h6c2 0 2.500 1 3 3l-2.500 1.500L9.500 14c-.5 1-1 2-3 2H4c-3 0-3.500-2-2.500-5L3.500 5C4 3 4.500 2 6 2z"/><path fill="url(#cop-b)" d="M13 6h4c3 0 4 2 3 5l-1.500 5H9z"/><path fill="#1b52c4" d="M11 2h1.500c1.500 0 2.200 1 2.700 4H12z"/><rect x="5" y="14" width="16" height="7" fill="#f8c613"/><text x="13" y="20" text-anchor="middle" font-size="6" font-weight="700" font-family="Roboto, sans-serif" fill="#111">PRE</text></svg></button>
  </footer>

  <section class="toast" role="status">
    <div class="toast-head"><span class="toast-icon"><svg width="10" height="11" viewBox="0 0 10 11"><path fill="#f8d775" d="M0 0h6v10H3l-1 1-2-1z"/><path fill="#1a86e0" d="M3 10c-1-3 2-4 3-3.500C7 5 9 6 9 7.500c2 0 1 2.500 0 2.500z"/></svg></span><span>OneDrive</span><button aria-label="Dismiss"><svg width="12" height="12" viewBox="0 0 12 12"><path d="M1.500 1.500l9 9M10.500 1.500l-9 9" stroke="#b5b4b3" stroke-width="1.200"/></svg></button></div>
    <div class="toast-body"><svg width="56" height="38"><use href="#cloud"/></svg><div><strong>Screenshot saved</strong><p>The screenshot was added to your OneDrive.</p></div></div>
  </section>
</div>
</body>
</html>
```
FILE: styles.css
```css
:root {
  --win: "Noto Sans", "Open Sans", sans-serif;
  --google: Roboto, Inter, sans-serif;
  --ink: #1f1f1f;
  --icon: #444746;
}
* { box-sizing: border-box; }
body { margin: 0; font-family: var(--google); color: var(--ink); overflow: hidden; }
button { border: 0; background: none; padding: 0; font: inherit; color: inherit; display: flex; align-items: center; justify-content: center; flex: none; }
svg { display: block; flex: none; }
a { color: inherit; text-decoration: none; }
input { border: 0; background: none; outline: 0; padding: 0; min-width: 0; font: inherit; }
h1, h2, p { margin: 0; }
.sprite { position: absolute; width: 0; height: 0; }
.line { fill: none; stroke: #5b5b66; stroke-width: 1.4; }
.thin { stroke-width: 1.1; }
.dark { stroke: #15141a; }
.fill { fill: #5f6368; }
.deep { fill: #444746; }

.screen { position: relative; display: flex; flex-direction: column; height: 100vh; background: #f6f8fc; }

/* Browser chrome */
.browser { font-family: var(--win); font-size: 12px; color: #15141a; border-bottom: 1px solid #c4c4c8; }
.tabstrip { display: flex; height: 44px; background: #f0f0f4; }
.tab-overview { width: 43px; padding-right: 3px; border-right: 1px solid #a9a9ae; }
.tabs { flex: 1; min-width: 0; display: flex; padding: 4px 0 4px 2px; }
.tab { flex: 1; min-width: 0; margin: 0 2px; padding: 0 8px; gap: 5px; border-radius: 4px; justify-content: flex-start; font-size: 11px; }
.tab-title { flex: 1; min-width: 0; padding-top: 2px; overflow: hidden; white-space: nowrap; text-align: left; line-height: 16px; mask-image: linear-gradient(to right, #000 calc(100% - 28px), transparent); }
.tab-active { background: #fff; box-shadow: 0 0 4px rgba(0, 0, 0, .4); padding-right: 11px; }
.tab-tools { display: flex; width: 120px; }
.tab-tools button { width: 40px; }
.window-tools { display: flex; width: 138px; }
.window-tools button { width: 46px; }
.navbar { display: flex; align-items: center; height: 40px; background: #f9f9fb; }
.nav-left { display: flex; width: 231px; padding-left: 6px; }
.nav-left button, .nav-right button { width: 36px; height: 32px; }
.nav-left button:disabled { opacity: .4; }
.urlbar { flex: 1; min-width: 0; display: flex; align-items: center; gap: 10px; height: 32px; padding: 0 8px 0 7px; border-radius: 4px; background: #f0f0f4; }
.url { flex: 1; min-width: 0; padding-top: 2px; overflow: hidden; white-space: nowrap; font-size: 13px; line-height: 20px; color: #85858b; outline: 0; }
.url b { font-weight: 400; color: #15141a; }
.nav-right { display: flex; justify-content: flex-end; width: 267px; padding-right: 6px; }

/* Mail application */
.gmail { flex: 1; min-height: 0; display: grid; grid-template-columns: 256px minmax(0, 1fr) 56px; grid-template-rows: 64px minmax(0, 1fr); padding-bottom: 16px; }
.gm-header { grid-column: 1 / -1; display: flex; align-items: center; }
.brand { display: flex; align-items: center; gap: 17px; width: 256px; padding-left: 24px; }
.brand a { display: flex; align-items: center; gap: 11px; font-size: 22px; color: #444746; }
.search { flex: 0 1 720px; display: flex; align-items: center; gap: 8px; height: 48px; padding: 0 16px 0 12px; border-radius: 24px; background: #eaf1fb; }
.search input { flex: 1; font-size: 16px; }
.search input::placeholder { color: #959a9f; }
.gm-tools { display: flex; align-items: center; gap: 20px; margin-left: auto; padding-right: 18px; }
.profile { width: 32px; height: 32px; border-radius: 50%; background: #5d4037; color: #fff; font-size: 18px; }

.sidebar { padding: 8px 16px 0 0; }
.compose { height: 56px; margin-left: 8px; padding: 0 22px 0 16px; gap: 16px; border-radius: 16px; background: #c2e7ff; color: #001d35; font-size: 15px; font-weight: 500; }
.folders { margin-top: 16px; }
.folder { display: flex; align-items: center; height: 32px; padding: 0 12px 0 26px; gap: 18px; border-radius: 0 16px 16px 0; font-size: 14px; }
.folder svg { fill: var(--icon); }
.folder span { flex: 1; }
.folder em { font-style: normal; font-size: 12px; color: #5e5e5e; }
.folder-on { background: #d3e3fd; font-weight: 700; color: #001d35; }
.folder-on svg { fill: #001d35; }
.folder-on em { color: #001d35; }
.folder-bold { font-weight: 700; }
.folder-bold em { font-weight: 400; }
.labels { display: flex; justify-content: space-between; align-items: center; height: 20px; margin-top: 27px; padding: 0 8px 0 26px; }
.labels h2 { font-size: 16px; font-weight: 500; }

.panel { display: flex; flex-direction: column; border-radius: 16px; background: #fff; overflow: hidden; }
.panel svg { fill: var(--icon); }
.mail-tools { display: flex; align-items: center; height: 48px; flex: none; padding: 0 22px 0 16px; }
.mail-tools button { width: 44px; height: 40px; }
.mail-tools .back { width: 20px; margin-right: 24px; }
.mail-tools .tight { width: 36px; }
.sep { width: 1px; height: 20px; margin: 0 8px 0 7px; background: #e1e3e6; }
.mail-tools .count { margin-left: auto; margin-right: 10px; font-size: 12px; color: #5e5e5e; }
.mail-tools .count ~ button { width: 40px; }
.mail-tools .faint { opacity: .4; }
.scroller { flex: 1; min-height: 0; display: flex; }
.message { flex: 1; min-width: 0; padding: 16px 16px 0; }
.subject { display: flex; align-items: center; height: 36px; padding-left: 56px; }
.subject h1 { font-size: 22px; font-weight: 400; }
.chip { height: 18px; margin-left: 9px; padding: 0 4px; gap: 4px; border-radius: 4px; background: #ddd; color: #5e5e5e; font-size: 12px; }
.subject-tools { display: flex; gap: 16px; margin-left: auto; }
.sender { display: flex; align-items: flex-start; margin-top: 16px; height: 40px; }
.avatar { width: 40px; height: 40px; margin-right: 16px; border-radius: 50%; background: #455a64; color: #fff; font-size: 22px; line-height: 38px; text-align: center; }
.from { flex: 1; line-height: 21px; }
.from strong { display: block; font-size: 15px; font-weight: 600; }
.from button { gap: 6px; font-size: 12px; color: #5e5e5e; }
.sender time { margin-right: 20px; font-size: 12px; line-height: 22px; color: #5e5e5e; }
.sender-tools { display: flex; gap: 20px; }

.email { margin: 28px 0 0 56px; background: #f3f3f3; }
.card { width: 84%; margin: 0 auto; padding: 45px 24px 19px; border-radius: 10px; background: #fff; font-family: "Liberation Sans", Arial, sans-serif; font-size: 16px; line-height: 24px; text-align: center; color: #626262; }
.card h2 { font-size: 24px; line-height: 28px; color: #333; }
.card p { margin-top: 20px; }
.card .lead { margin-top: 24px; }
.otp { width: 240px; margin: 29px auto 30px; padding: 21px 20px 19px; border-radius: 8px; background: #f3fbfd; color: #2b2f33; font-size: 36px; font-weight: 700; line-height: 54px; }
.card .small { margin-top: 0; font-size: 14px; line-height: 22px; }
.card .legal { margin-top: 39px; }

.scrollbar { width: 17px; background: #f0f0f0; }
.scrollbar button { width: 17px; height: 17px; }
.scrollbar span { display: block; height: 77%; background: #cdcdcd; }
.rail { display: flex; flex-direction: column; align-items: center; gap: 36px; padding-top: 18px; }
.rail hr { width: 20px; height: 1px; margin: -2px 0 -2px; border: 0; background: #dcdedc; }

/* Desktop taskbar */
.taskbar { display: flex; height: 40px; flex: none; background: linear-gradient(90deg, #3b322d, #38332f 25%, #2c3a3d 42%, #293a40); color: #fff; font-family: var(--win); font-size: 12px; }
.start { width: 48px; }
.win-search { display: flex; align-items: center; gap: 11px; width: 288px; padding: 0 9px 0 10px; border: 1px solid #bdbdbd; background: #f2f2f2; }
.win-search input { flex: 1; font-size: 14px; }
.win-search input::placeholder { color: #2b2b2b; opacity: 1; }
.view { width: 49px; }
.apps { display: flex; margin-left: 6px; }
.app { gap: 2px; font-size: 11px; }
.app.open { width: 65px; margin-right: 8px; padding-left: 3px; justify-content: flex-start; border-bottom: 2px solid #b9b7b4; }
.app.current { width: 73px; margin: 0 1px 0 -3px; padding-left: 6px; gap: 4px; background: #454341; border-bottom-color: #454341; }
.app.pin { width: 40px; }
.app.pin + .open { margin-left: 6px; }
.weather { margin-left: auto; gap: 8px; font-size: 13px; }
.tray { display: flex; margin-left: 20px; }
.tray button { width: 24px; }
.tline { fill: none; stroke: #fff; stroke-width: 1.2; }
.lang, .clock { flex-direction: column; font-size: 11px; line-height: 17px; }
.lang { width: 36px; }
.clock { width: 62px; }
.notes { width: 44px; padding-left: 8px; }
.copilot { width: 38px; margin-right: 4px; }
.copilot + * { margin: 0; }
.taskbar::after { content: ""; width: 5px; margin-left: 4px; border-left: 1px solid #66747a; }

/* Notification over the desktop */
.toast { position: absolute; right: 16px; bottom: 53px; width: 364px; padding: 18px 16px 20px; background: #53524f; color: #fff; font-family: var(--win); }
.toast-head { display: flex; align-items: center; gap: 8px; height: 17px; font-size: 11px; }
.toast-head button { margin-left: auto; margin-right: 6px; }
.toast-icon { display: flex; align-items: center; justify-content: center; width: 16px; height: 16px; background: #403f3d; }
.toast-body { display: flex; align-items: center; gap: 18px; margin-top: 16px; padding-left: 2px; font-size: 14px; line-height: 20px; }
.toast-body strong { font-weight: 600; }
.toast-body p { color: #b5b4b3; }
```
